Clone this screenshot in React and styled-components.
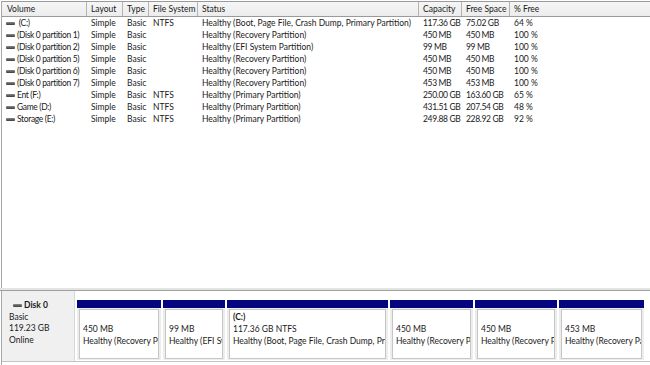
import styled, { createGlobalStyle } from 'styled-components';

const GlobalStyle = createGlobalStyle`
    html, body {
        margin: 0;
        padding: 0;
        background: #ffffff;
    }
`;

const Window = styled.div`
    width: 650px;
    height: 365px;
    overflow: hidden;
    display: flex;
    flex-direction: column;
    background: #ffffff;
    font-family: Lato, 'Liberation Sans', sans-serif;
    font-size: 8.5px;
    color: #1a1a1a;
`;

const ListPane = styled.div`
    height: 287px;
    margin-top: 1px;
    margin-left: 1px;
    border-left: 1px solid #a8a8a8;
    display: flex;
    flex-direction: column;
`;

const columns = '85px 36px 26px 49px 221px 43px 48px 1fr';

const HeaderRow = styled.div`
    display: grid;
    grid-template-columns: ${columns};
    height: 14px;
    border-top: 1px solid #9a9a9a;
    border-bottom: 1px solid #9a9a9a;
    background: linear-gradient(#f6f6f6, #ececec);
`;

const HeaderCell = styled.div`
    display: flex;
    align-items: center;
    padding-left: ${(p) => (p.$first ? '5px' : '4px')};
    border-right: ${(p) => (p.$last ? 'none' : '1px solid #b4b4b4')};
    white-space: nowrap;
    overflow: hidden;
`;

const Row = styled.div`
    display: grid;
    grid-template-columns: ${columns};
    height: 12px;
`;

const Cell = styled.div`
    display: flex;
    align-items: center;
    padding-left: ${(p) => (p.$first ? '4px' : '4px')};
    letter-spacing: ${(p) => (p.$tight ? '-0.35px' : '0')};
    white-space: pre;
    overflow: hidden;
`;

const VolumeIcon = styled.span`
    display: inline-block;
    width: 9px;
    height: 3px;
    margin-right: 2px;
    background: linear-gradient(#8a8a8a, #3c3c3c);
    border-radius: 1px;
    flex-shrink: 0;
`;

const Splitter = styled.div`
    height: 2px;
    background: #e4e4e4;
    border-bottom: 1px solid #a0a0a0;
`;

const GraphPane = styled.div`
    flex: 1;
    margin-left: 1px;
    border-left: 1px solid #a8a8a8;
    display: flex;
    flex-direction: column;
`;

const DiskRow = styled.div`
    display: flex;
    height: 70px;
    border-bottom: 1px solid #c4c4c4;
`;

const DiskLabel = styled.div`
    width: 73px;
    background: #f0f0f0;
    border-right: 1px solid #d8d8d8;
    padding: 9px 0 0 7px;
    box-sizing: border-box;
    line-height: 11.5px;
`;

const DiskName = styled.div`
    display: flex;
    align-items: center;
    font-weight: bold;
    padding-left: 4px;
`;

const Partitions = styled.div`
    flex: 1;
    display: flex;
    gap: 2px;
    padding: 9px 0 1px 2px;
    background: #ffffff;
`;

const Partition = styled.div`
    width: ${(p) => p.$w}px;
    flex-shrink: 0;
    display: flex;
    flex-direction: column;
    background: #ededed;
    padding-bottom: 1px;
`;

const NavyBar = styled.div`
    height: 8px;
    background: #050580;
`;

const PartBody = styled.div`
    flex: 1;
    margin: 1px 2px 0;
    background: #ffffff;
    border: 1px solid #c6c6c6;
    padding: 1px 0 0 3px;
    white-space: nowrap;
    overflow: hidden;
`;

const Line = styled.div`
    height: 12px;
    line-height: 12px;
    font-weight: ${(p) => (p.$bold ? 'bold' : 'normal')};
    overflow: hidden;
`;

const headers = ['Volume', 'Layout', 'Type', 'File System', 'Status', 'Capacity', 'Free Space', '% Free'];

const volumes = [
    [' (C:)', 'Simple', 'Basic', 'NTFS', 'Healthy (Boot, Page File, Crash Dump, Primary Partition)', '117.36 GB', '75.02 GB', '64 %'],
    ['(Disk 0 partition 1)', 'Simple', 'Basic', '', 'Healthy (Recovery Partition)', '450 MB', '450 MB', '100 %'],
    ['(Disk 0 partition 2)', 'Simple', 'Basic', '', 'Healthy (EFI System Partition)', '99 MB', '99 MB', '100 %'],
    ['(Disk 0 partition 5)', 'Simple', 'Basic', '', 'Healthy (Recovery Partition)', '450 MB', '450 MB', '100 %'],
    ['(Disk 0 partition 6)', 'Simple', 'Basic', '', 'Healthy (Recovery Partition)', '450 MB', '450 MB', '100 %'],
    ['(Disk 0 partition 7)', 'Simple', 'Basic', '', 'Healthy (Recovery Partition)', '453 MB', '453 MB', '100 %'],
    ['Ent (F:)', 'Simple', 'Basic', 'NTFS', 'Healthy (Primary Partition)', '250.00 GB', '163.60 GB', '65 %'],
    ['Game (D:)', 'Simple', 'Basic', 'NTFS', 'Healthy (Primary Partition)', '431.51 GB', '207.54 GB', '48 %'],
    ['Storage (E:)', 'Simple', 'Basic', 'NTFS', 'Healthy (Primary Partition)', '249.88 GB', '228.92 GB', '92 %'],
];

const parts = [
    { w: 84, name: '', size: '450 MB', status: 'Healthy (Recovery Partition)' },
    { w: 62, name: '', size: '99 MB', status: 'Healthy (EFI System Partition)' },
    { w: 161, name: '(C:)', size: '117.36 GB NTFS', status: 'Healthy (Boot, Page File, Crash Dump, Primary Partition)' },
    { w: 83, name: '', size: '450 MB', status: 'Healthy (Recovery Partition)' },
    { w: 82, name: '', size: '450 MB', status: 'Healthy (Recovery Partition)' },
    { w: 85, name: '', size: '453 MB', status: 'Healthy (Recovery Partition)' },
];

const App = () => {
    return (
        <Window>
            <GlobalStyle />
            <ListPane>
                <HeaderRow>
                    {headers.map((h, i) => (
                        <HeaderCell key={h} $first={i === 0} $last={i === headers.length - 1}>{h}</HeaderCell>
                    ))}
                </HeaderRow>
                {volumes.map((v) => (
                    <Row key={v[0]}>
                        {v.map((text, i) => (
                            <Cell key={i} $first={i === 0} $tight={i === 0 || i === 5 || i === 6}>
                                {i === 0 && <VolumeIcon />}
                                {text}
                            </Cell>
                        ))}
                    </Row>
                ))}
            </ListPane>
            <Splitter />
            <GraphPane>
                <DiskRow>
                    <DiskLabel>
                        <DiskName>
                            <VolumeIcon />
                            Disk 0
                        </DiskName>
                        <div>Basic</div>
                        <div>119.23 GB</div>
                        <div>Online</div>
                    </DiskLabel>
                    <Partitions>
                        {parts.map((p, i) => (
                            <Partition key={i} $w={p.w}>
                                <NavyBar />
                                <PartBody>
                                    <Line $bold>{p.name}</Line>
                                    <Line>{p.size}</Line>
                                    <Line>{p.status}</Line>
                                </PartBody>
                            </Partition>
                        ))}
                    </Partitions>
                </DiskRow>
            </GraphPane>
        </Window>
    );
};

export default App;
